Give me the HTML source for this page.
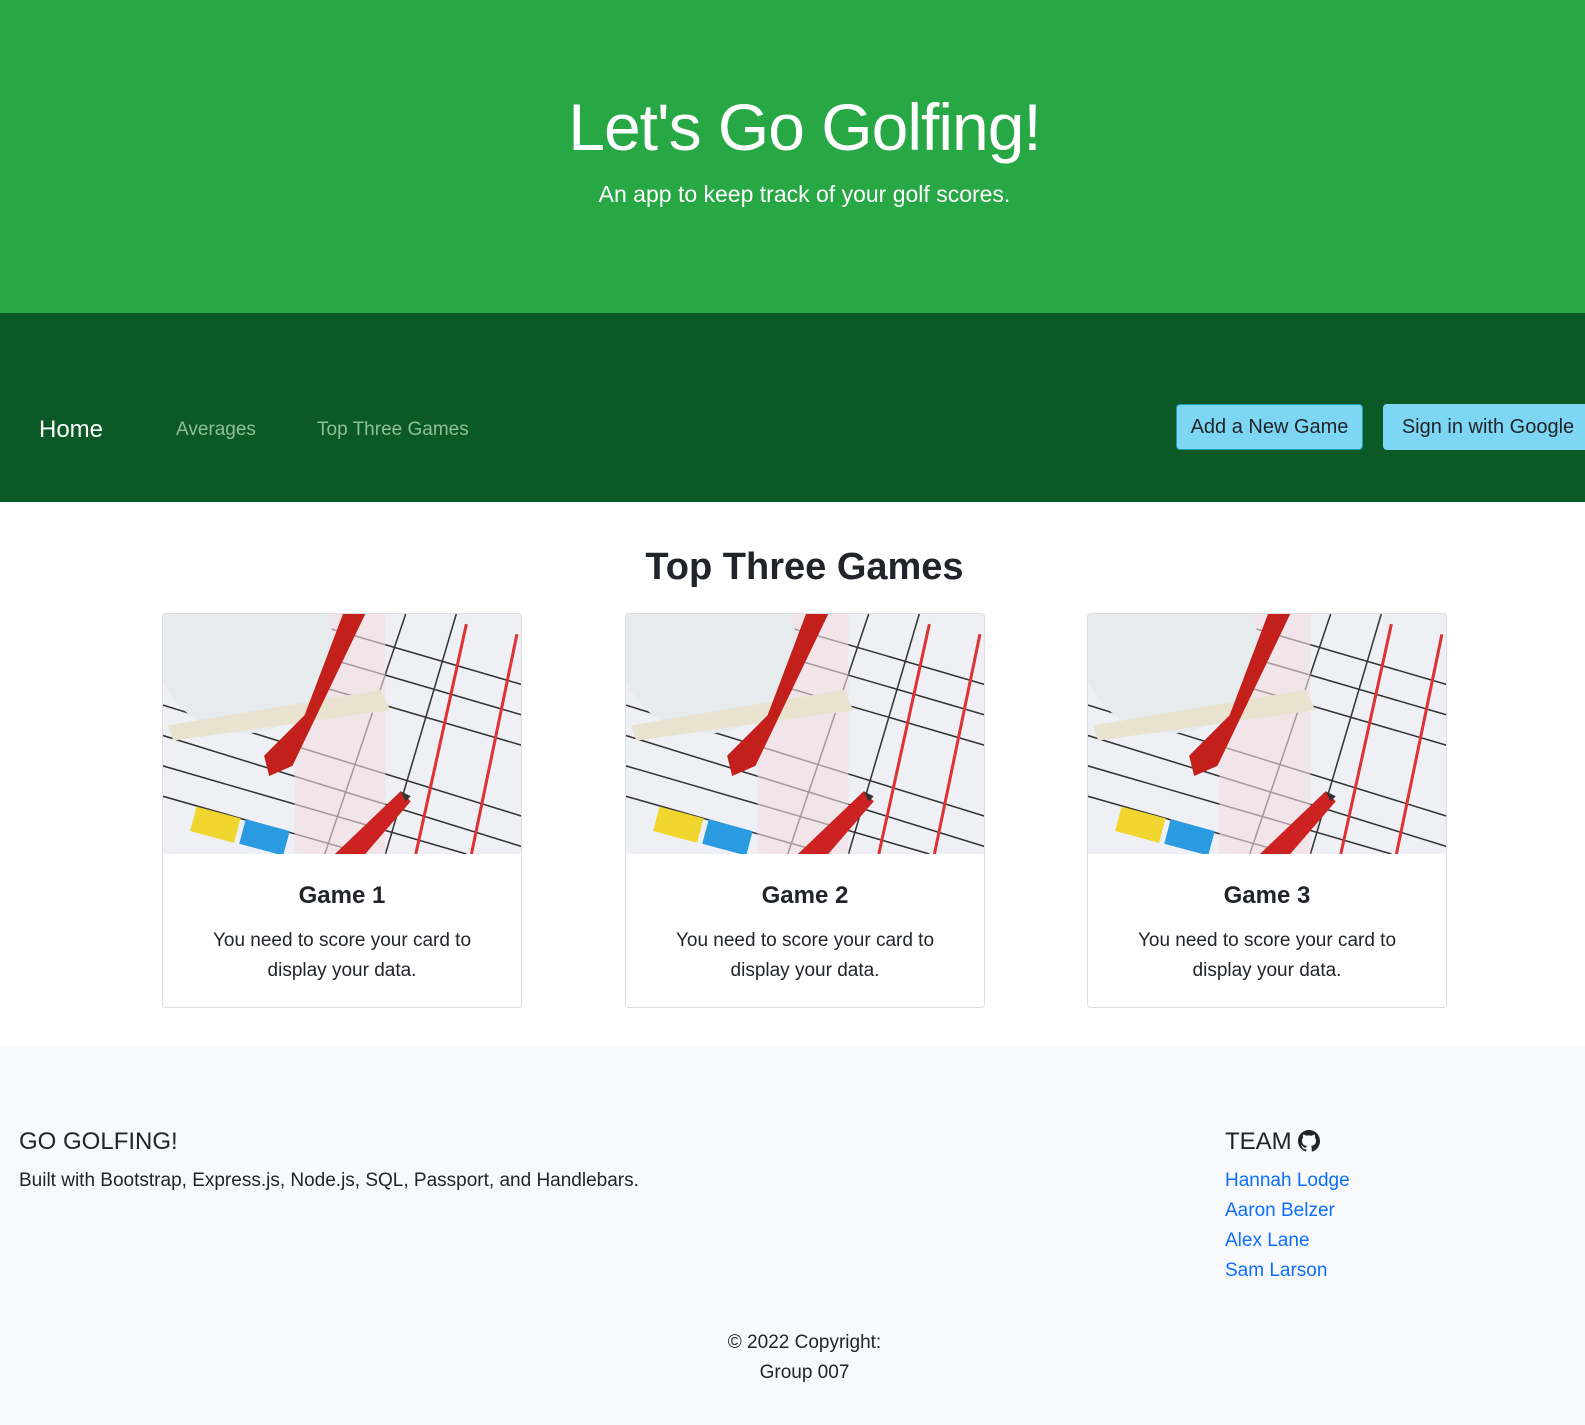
<!DOCTYPE html>
<html><head><meta charset="utf-8"><style>
*{box-sizing:border-box;margin:0;padding:0}
body{width:1585px;height:1425px;font-family:"Liberation Sans",sans-serif;color:#212529;background:#fff;overflow:hidden;position:relative}
.hero{position:absolute;left:0;top:0;width:1585px;height:313px;background:#28a745;color:#fff;text-align:center}
.hero h1{position:absolute;top:89px;left:12px;width:100%;font-size:66px;font-weight:300;letter-spacing:-1px}
.hero p{position:absolute;top:181px;left:12px;width:100%;font-size:23px;font-weight:300}
.nav{position:absolute;left:0;top:313px;width:1585px;height:189px;background:#0b5a26}
.nav a{position:absolute;top:106px;font-size:19px;color:#8fbf9a;text-decoration:none}
.btn{position:absolute;top:91px;height:46px;background:#7dd6f3;border:1px solid #17a2b8;border-radius:4px;font-size:20px;color:#212529;line-height:44px;text-align:center}
h2{position:absolute;top:546px;left:12px;width:100%;text-align:center;font-size:38px;font-weight:bold}
.card{position:absolute;top:613px;width:360px;height:395px;border:1px solid #ddd;border-radius:4px;overflow:hidden;text-align:center}
.card svg{display:block}
.card h5{margin-top:28px;font-size:24px;font-weight:bold}
.card p{margin-top:16px;font-size:19px;line-height:30px;padding:0 30px}
.foot{position:absolute;left:0;top:1046px;width:1585px;height:379px;background:#f8f9fa}
.foot h6{position:absolute;font-size:24px;font-weight:500}
.foot .t{position:absolute;font-size:19px}
.foot a{display:block;color:#0d6efd;text-decoration:none;font-size:19px;line-height:30px}
</style></head><body>
<div class="hero"><h1>Let's Go Golfing!</h1><p>An app to keep track of your golf scores.</p></div>
<div class="nav">
<a style="left:39px;color:#fff;font-size:24px;top:103px">Home</a>
<a style="left:176px">Averages</a>
<a style="left:317px">Top Three Games</a>
<div class="btn" style="left:1176px;width:187px">Add a New Game</div>
<div class="btn" style="left:1383px;width:210px;border-color:#7dd6f3">Sign in with Google</div>
</div>
<h2>Top Three Games</h2>
<div class="card" style="left:162px"><svg width="360" height="240" viewBox="0 0 356 237" preserveAspectRatio="none"><rect width="356" height="237" fill="#eef0f6"/><g stroke="#333" stroke-width="1.5"><line x1="0" y1="90" x2="356" y2="200"/><line x1="0" y1="120" x2="356" y2="230"/><line x1="0" y1="150" x2="300" y2="237"/><line x1="0" y1="180" x2="200" y2="237"/><line x1="150" y1="10" x2="356" y2="70"/><line x1="150" y1="40" x2="356" y2="100"/><line x1="150" y1="70" x2="356" y2="130"/><line x1="240" y1="0" x2="160" y2="237"/><line x1="290" y1="0" x2="220" y2="237"/></g><rect x="130" y="0" width="90" height="237" fill="#f3dde2" opacity=".6"/><g stroke="#d33" stroke-width="3" fill="none"><path d="M300 10 L250 237 M350 20 L305 237"/></g><rect x="30" y="195" width="45" height="25" fill="#f2d630" transform="rotate(15 50 205)"/><rect x="78" y="208" width="45" height="25" fill="#2a9be0" transform="rotate(15 100 220)"/><circle cx="80" cy="30" r="88" fill="#e6ebee"/><path d="M5 110 L215 75 L225 95 L10 125Z" fill="#e8e2cf"/><path d="M178 0 L200 0 L128 150 L105 160 L100 140 L140 100Z" fill="#c3201c"/><path d="M170 237 L235 175 L245 185 L200 237Z" fill="#cc2222"/><path d="M235 175 L245 180 L240 185Z" fill="#333"/></svg><h5>Game 1</h5><p>You need to score your card to display your data.</p></div>
<div class="card" style="left:625px"><svg width="360" height="240" viewBox="0 0 356 237" preserveAspectRatio="none"><rect width="356" height="237" fill="#eef0f6"/><g stroke="#333" stroke-width="1.5"><line x1="0" y1="90" x2="356" y2="200"/><line x1="0" y1="120" x2="356" y2="230"/><line x1="0" y1="150" x2="300" y2="237"/><line x1="0" y1="180" x2="200" y2="237"/><line x1="150" y1="10" x2="356" y2="70"/><line x1="150" y1="40" x2="356" y2="100"/><line x1="150" y1="70" x2="356" y2="130"/><line x1="240" y1="0" x2="160" y2="237"/><line x1="290" y1="0" x2="220" y2="237"/></g><rect x="130" y="0" width="90" height="237" fill="#f3dde2" opacity=".6"/><g stroke="#d33" stroke-width="3" fill="none"><path d="M300 10 L250 237 M350 20 L305 237"/></g><rect x="30" y="195" width="45" height="25" fill="#f2d630" transform="rotate(15 50 205)"/><rect x="78" y="208" width="45" height="25" fill="#2a9be0" transform="rotate(15 100 220)"/><circle cx="80" cy="30" r="88" fill="#e6ebee"/><path d="M5 110 L215 75 L225 95 L10 125Z" fill="#e8e2cf"/><path d="M178 0 L200 0 L128 150 L105 160 L100 140 L140 100Z" fill="#c3201c"/><path d="M170 237 L235 175 L245 185 L200 237Z" fill="#cc2222"/><path d="M235 175 L245 180 L240 185Z" fill="#333"/></svg><h5>Game 2</h5><p>You need to score your card to display your data.</p></div>
<div class="card" style="left:1087px"><svg width="360" height="240" viewBox="0 0 356 237" preserveAspectRatio="none"><rect width="356" height="237" fill="#eef0f6"/><g stroke="#333" stroke-width="1.5"><line x1="0" y1="90" x2="356" y2="200"/><line x1="0" y1="120" x2="356" y2="230"/><line x1="0" y1="150" x2="300" y2="237"/><line x1="0" y1="180" x2="200" y2="237"/><line x1="150" y1="10" x2="356" y2="70"/><line x1="150" y1="40" x2="356" y2="100"/><line x1="150" y1="70" x2="356" y2="130"/><line x1="240" y1="0" x2="160" y2="237"/><line x1="290" y1="0" x2="220" y2="237"/></g><rect x="130" y="0" width="90" height="237" fill="#f3dde2" opacity=".6"/><g stroke="#d33" stroke-width="3" fill="none"><path d="M300 10 L250 237 M350 20 L305 237"/></g><rect x="30" y="195" width="45" height="25" fill="#f2d630" transform="rotate(15 50 205)"/><rect x="78" y="208" width="45" height="25" fill="#2a9be0" transform="rotate(15 100 220)"/><circle cx="80" cy="30" r="88" fill="#e6ebee"/><path d="M5 110 L215 75 L225 95 L10 125Z" fill="#e8e2cf"/><path d="M178 0 L200 0 L128 150 L105 160 L100 140 L140 100Z" fill="#c3201c"/><path d="M170 237 L235 175 L245 185 L200 237Z" fill="#cc2222"/><path d="M235 175 L245 180 L240 185Z" fill="#333"/></svg><h5>Game 3</h5><p>You need to score your card to display your data.</p></div>
<div class="foot">
<h6 style="left:19px;top:82px">GO GOLFING!</h6>
<div class="t" style="left:19px;top:124px">Built with Bootstrap, Express.js, Node.js, SQL, Passport, and Handlebars.</div>
<h6 style="left:1225px;top:82px">TEAM <svg width="22" height="22" viewBox="0 0 16 16" style="vertical-align:-3px"><path fill="#212529" d="M8 0C3.58 0 0 3.58 0 8c0 3.54 2.29 6.53 5.47 7.59.4.07.55-.17.55-.38v-1.33c-2.23.48-2.7-1.07-2.7-1.07-.36-.92-.89-1.17-.89-1.17-.73-.5.05-.49.05-.49.8.06 1.23.83 1.23.83.71 1.22 1.87.87 2.33.66.07-.52.28-.87.5-1.07-1.78-.2-3.64-.89-3.64-3.95 0-.87.31-1.59.82-2.15-.08-.2-.36-1.02.08-2.12 0 0 .67-.21 2.2.82a7.6 7.6 0 0 1 4 0c1.53-1.04 2.2-.82 2.2-.82.44 1.1.16 1.92.08 2.12.51.56.82 1.27.82 2.15 0 3.07-1.87 3.75-3.65 3.95.29.25.54.73.54 1.48v2.2c0 .21.15.46.55.38A8 8 0 0 0 16 8c0-4.42-3.58-8-8-8z"/></svg></h6>
<div style="position:absolute;left:1225px;top:120px"><a>Hannah Lodge</a><a>Aaron Belzer</a><a>Alex Lane</a><a>Sam Larson</a></div>
<div class="t" style="left:12px;width:1585px;text-align:center;top:282px;line-height:30px">© 2022 Copyright:<br>Group 007</div>
</div>
</body></html>
